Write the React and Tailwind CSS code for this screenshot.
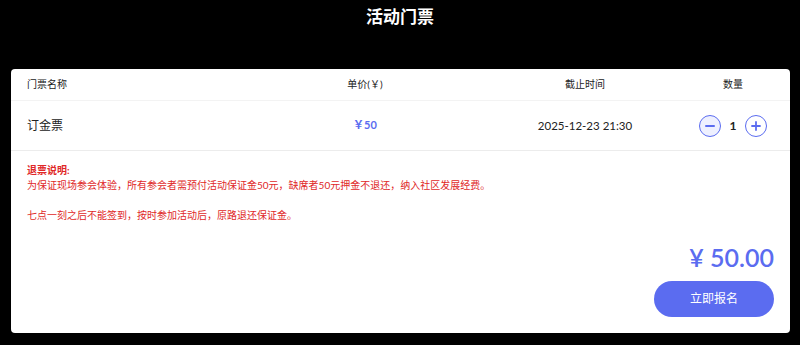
export default function App() {
  const font = { fontFamily: 'Lato, "Noto Sans CJK SC", sans-serif' };
  return (
    <div className="w-[800px] h-[345px] bg-black flex flex-col" style={font}>
      <div className="h-[69px] flex justify-center pt-[5px]">
        <h1 className="text-[17px] leading-[24px] font-bold text-white">活动门票</h1>
      </div>
      <div className="ml-[11px] mr-[10px] bg-white rounded-[4px] flex flex-col">
        <div className="grid grid-cols-[221px_234px_206px_90px] pl-4 pr-3 h-[32px] items-center border-b border-[#f3f3f3] text-[10px] text-[#222]">
          <div>门票名称</div>
          <div className="text-center">单价(￥)</div>
          <div className="text-center">截止时间</div>
          <div className="text-center">数量</div>
        </div>
        <div className="grid grid-cols-[221px_234px_206px_90px] pl-4 pr-3 h-[50px] items-center border-b border-[#ececec] text-[12px] text-[#222]">
          <div>订金票</div>
          <div className="text-center text-[#5b6cf0] font-bold text-[11px]">￥50</div>
          <div className="text-center text-[11.5px]">2025-12-23 21:30</div>
          <div className="flex justify-center items-center">
            <button className="w-[22px] h-[22px] rounded-full border border-[#5b6cf0] bg-[#eef0ff] flex items-center justify-center">
              <svg width="12" height="12" viewBox="0 0 12 12"><path d="M2 6h8" stroke="#5b6cf0" strokeWidth="2" strokeLinecap="round" /></svg>
            </button>
            <span className="w-[24px] text-center text-[12px] font-bold">1</span>
            <button className="w-[22px] h-[22px] rounded-full border border-[#5b6cf0] bg-white flex items-center justify-center">
              <svg width="12" height="12" viewBox="0 0 12 12"><path d="M2 6h8M6 2v8" stroke="#5b6cf0" strokeWidth="1.8" strokeLinecap="round" /></svg>
            </button>
          </div>
        </div>
        <div className="pl-4 pt-[12px] text-[10px] leading-[15px] text-[#e02828]">
          <div className="font-bold">退票说明:</div>
          <div>为保证现场参会体验，所有参会者需预付活动保证金50元，缺席者50元押金不退还，纳入社区发展经费。</div>
          <div className="h-[15px]"></div>
          <div>七点一刻之后不能签到，按时参加活动后，原路退还保证金。</div>
        </div>
        <div className="flex flex-col items-end pr-4 pt-[20px] pb-4">
          <div className="text-[25px] leading-[28px] text-[#5b6cf0] font-semibold">¥ 50.00</div>
          <button className="mt-[10px] w-[120px] h-[36px] rounded-full bg-[#5b6cf0] text-white text-[12px]">立即报名</button>
        </div>
      </div>
    </div>
  );
}
